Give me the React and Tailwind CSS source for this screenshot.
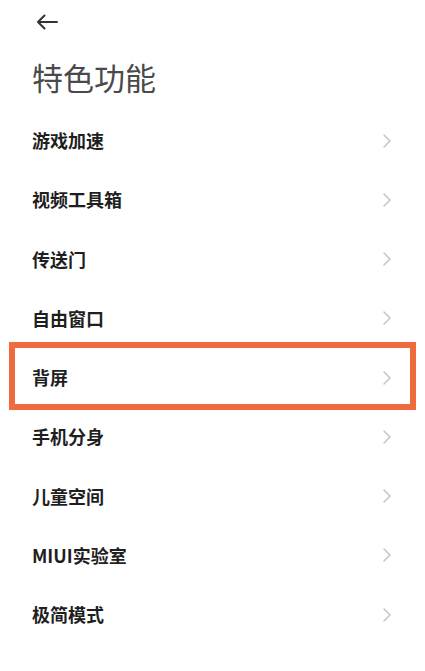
import React from "react";

const items = ["游戏加速", "视频工具箱", "传送门", "自由窗口", "背屏", "手机分身", "儿童空间", "MIUI实验室", "极简模式"];

function Chevron() {
  return (
    <svg width="10" height="16" viewBox="0 0 10 16" fill="none">
      <path d="M2 2 L8 8 L2 14" stroke="#c4c4c4" strokeWidth="1.5" strokeLinecap="round" strokeLinejoin="round" />
    </svg>
  );
}

export default function App() {
  return (
    <div className="w-[425px] h-[671px] bg-white overflow-hidden" style={{ fontFamily: '"Noto Sans CJK SC", "Noto Sans", sans-serif' }}>
      <div className="pl-[35px] pt-[13px] h-[18px] box-content">
        <svg width="23" height="18" viewBox="0 0 23 18" fill="none">
          <path d="M22 9 H3 M9.5 2.5 L3 9 L9.5 15.5" stroke="#333" strokeWidth="2" strokeLinecap="round" strokeLinejoin="round" />
        </svg>
      </div>
      <div className="pl-[32px] mt-[27px] text-[31px] leading-[38px] text-[#4a4a4a] font-normal">特色功能</div>
      <div className="mt-[15px]">
        {items.map((t, i) => (
          <div key={t} className="relative h-[59.25px] flex items-center justify-between pl-[32px] pr-[33px]">
            <span className="text-[18px] font-bold text-[#1f1f1f]">{t}</span>
            <Chevron />
            {i === 4 && (
              <div className="absolute left-[9px] right-[9px] top-[-6px] bottom-[-3px] border-[6px] border-[#ee6b3e]" />
            )}
          </div>
        ))}
      </div>
    </div>
  );
}
